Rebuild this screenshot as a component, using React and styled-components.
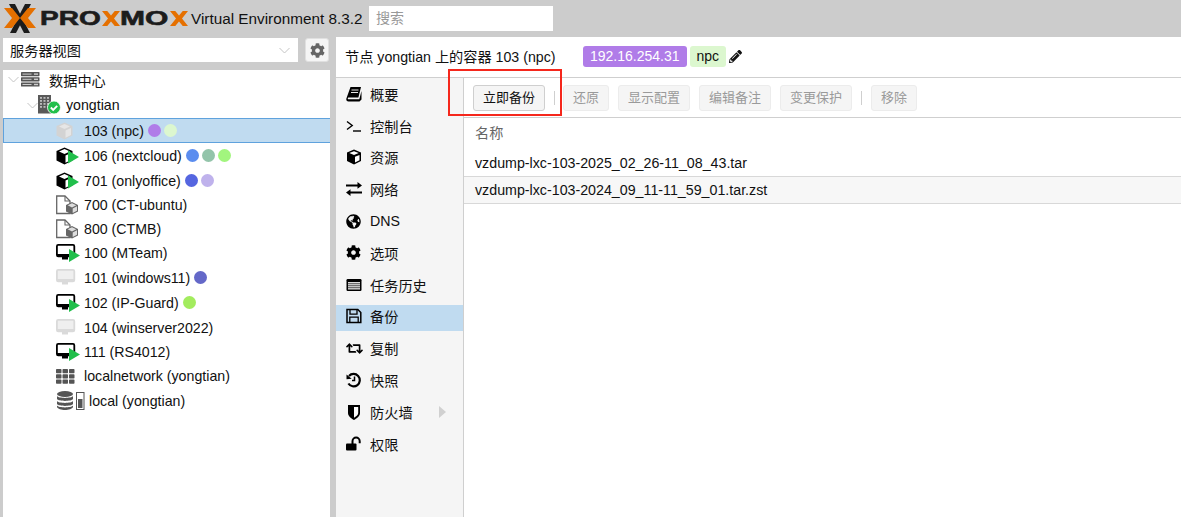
import React from 'react'
import styled, { createGlobalStyle } from 'styled-components'
import { FaGlobeAmericas, FaCog, FaRetweet, FaPencilAlt } from 'react-icons/fa'

const GlobalStyle = createGlobalStyle`
  html, body { margin: 0; padding: 0; background: #cccccc; }
  body { font-family: "Liberation Sans", "Noto Sans CJK SC", sans-serif; color: #000; overflow: hidden; }
  * { box-sizing: border-box; }
`

const Page = styled.div`
  position: relative;
  width: 1181px;
  height: 517px;
  overflow: hidden;
  display: flex;
  flex-direction: column;
`
const TopBar = styled.header`
  height: 37px;
  display: flex;
  align-items: center;
  padding-left: 4px;
`
const Brand = styled.div`
  display: flex;
  align-items: center;
  width: 187px;
`
const LogoSlot = styled.span`
  display: inline-flex;
  width: 36px;
`
const BrandText = styled.span`
  font-family: "Liberation Sans", sans-serif;
  font-weight: 700;
  font-size: 20px;
  color: #1c1c1c;
  -webkit-text-stroke: 0.6px #1c1c1c;
  transform: scaleX(${p => p.$sx});
  transform-origin: left center;
  width: ${p => p.$w}px;
  display: inline-block;
`
const Version = styled.div`
  font-size: 15.3px;
  color: #111;
  width: 178px;
`
const Search = styled.div`
  width: 184px;
  height: 25px;
  background: #fff;
  color: #999;
  font-size: 14px;
  padding: 1px 7px;
`
const Main = styled.div`
  flex: 1;
  display: flex;
  min-height: 0;
`
const Left = styled.aside`
  width: 327px;
  margin: 1px 0 0 3px;
  display: flex;
  flex-direction: column;
`
const ViewRow = styled.div`
  display: flex;
  height: 24px;
  gap: 7px;
  margin-bottom: 8px;
`
const ViewSelect = styled.div`
  width: 295px;
  background: #fff;
  font-size: 14.2px;
  display: flex;
  align-items: center;
  justify-content: space-between;
  padding: 0 8px 0 7px;
  color: #111;
`
const GearButton = styled.div`
  width: 24px;
  background: #f5f5f5;
  border: 1px solid #e0e0e0;
  border-radius: 3px;
  display: flex;
  align-items: center;
  justify-content: center;
  color: #666;
  font-size: 15px;
`
const Tree = styled.div`
  flex: 1;
  background: #fff;
`
const Row = styled.div`
  display: flex;
  align-items: center;
  height: ${p => p.$h || 24}px;
  padding-left: ${p => p.$indent}px;
  padding-bottom: ${p => p.$pb || 0}px;
  font-size: 14.2px;
  color: #111;
  background: ${p => (p.$selected ? '#c0dbf0' : 'transparent')};
  box-shadow: ${p => (p.$selected ? 'inset 1px 1px 0 #5fa2dd, inset 0 -1px 0 #5fa2dd' : 'none')};
`
const Arrow = styled.span`
  width: ${p => p.$w}px;
  display: inline-flex;
`
const IconSlot = styled.span`
  width: ${p => p.$w || 28}px;
  height: 20px;
  display: inline-flex;
  align-items: center;
  flex: none;
`
const Dots = styled.span`
  display: inline-flex;
  gap: 3px;
  margin-left: 4px;
`
const Dot = styled.span`
  width: 13px;
  height: 13px;
  border-radius: 50%;
  background: ${p => p.$c};
`
const Right = styled.section`
  flex: 1;
  margin-left: 6px;
  background: #fff;
  display: flex;
  flex-direction: column;
  min-width: 0;
`
const TitleBar = styled.div`
  height: 41px;
  display: flex;
  align-items: center;
  border-bottom: 1px solid #cfcfcf;
  padding: 0 0 2px 9px;
  font-size: 14.2px;
  color: #111;
`
const TitleText = styled.div`
  width: 238px;
`
const Tag = styled.span`
  height: 21px;
  line-height: 20px;
  padding: 0 7px;
  border-radius: 3px;
  margin-right: 3px;
  font-size: 14px;
  background: ${p => p.$bg};
  color: ${p => p.$fg};
`
const Body = styled.div`
  flex: 1;
  display: flex;
  min-height: 0;
`
const Menu = styled.nav`
  width: 128px;
  background: #f5f5f5;
  border-right: 1px solid #cfcfcf;
  padding-top: 4.4px;
  display: flex;
  flex-direction: column;
  gap: 5.8px;
`
const MenuItem = styled.div`
  height: 26px;
  display: flex;
  align-items: center;
  padding: 0 0 3px 10px;
  font-size: 14.2px;
  color: #111;
  background: ${p => (p.$active ? '#c0dbf0' : 'transparent')};
`
const MenuIcon = styled.span`
  width: 24px;
  display: inline-flex;
  align-items: center;
  color: #000;
  font-size: 15px;
`
const MenuLabel = styled.span`
  width: 69px;
`
const Content = styled.div`
  flex: 1;
  display: flex;
  flex-direction: column;
  min-width: 0;
`
const Toolbar = styled.div`
  height: 40px;
  border-bottom: 1px solid #cfcfcf;
  display: flex;
  align-items: center;
  padding-left: 9px;
  gap: 9px;
`
const ToolButton = styled.div`
  height: 26px;
  line-height: 23px;
  padding: 0 9px;
  font-size: 13px;
  background: #f5f5f5;
  border: 1px solid ${p => (p.$disabled ? '#ececec' : '#cfcfcf')};
  border-radius: 3px;
  color: ${p => (p.$disabled ? '#9a9a9a' : '#111')};
`
const Sep = styled.span`
  width: 1px;
  height: 14px;
  background: #cfcfcf;
  margin-right: ${p => (p.$tight ? -1 : 0)}px;
`
const GridHead = styled.div`
  height: 32px;
  padding: 0 11px 5px;
  display: flex;
  align-items: center;
  font-size: 14.2px;
  color: #666;
`
const GridRow = styled.div`
  height: 27px;
  padding: 0 11px;
  display: flex;
  align-items: center;
  font-size: 14.24px;
  color: #111;
  border-bottom: 1px solid #d8d8d8;
  background: ${p => (p.$alt ? '#f7f7f7' : '#fff')};
`
const Highlight = styled.div`
  position: absolute;
  left: 448px;
  top: 69px;
  width: 114px;
  height: 47px;
  border: 2px solid #f5271c;
  pointer-events: none;
`
const SubArrow = styled.span`
  width: 0;
  height: 0;
  border-left: 7px solid #d0d0d0;
  border-top: 6px solid transparent;
  border-bottom: 6px solid transparent;
`

const LogoX = () => (
  <svg width="32" height="29" viewBox="0 0 32 29">
    <path d="M5 0h6l15 29h-6z" fill="#1c1c1c" />
    <path d="M27 0h-6L6 29h6z" fill="#1c1c1c" />
    <path d="M0 4h8l8 10-8 10H0l8-10z" fill="#e57000" />
    <path d="M32 4h-8l-8 10 8 10h8l-8-10z" fill="#e57000" />
  </svg>
)
const SmallX = () => (
  <svg width="18" height="15" viewBox="0 0 24 20">
    <path d="M0 0h7l5 6 5-6h7l-8 10 8 10h-7l-5-6-5 6H0l8-10z" fill="#e57000" />
  </svg>
)

const Play = ({ x, y }) => <path d={`M${x} ${y}l11 6.500-11 6.500z`} fill="#21bf4b" />

const Cube = ({ grey, play }) => (
  <svg width="24" height="18" viewBox="0 0 24 18">
    <path d="M8.500 .5l8 3.500v9.500l-8 4-8-4V4z" fill={grey ? '#d3d3d3' : '#000'} />
    <path d="M8.500 2l5.500 2.400-5.500 2.500L3 4.400z" fill={grey ? '#e6e6e6' : '#fff'} />
    <path d="M9.500 8.500l5.500-2.600v7L9.500 15.700z" fill={grey ? '#e6e6e6' : '#fff'} />
    {play && <Play x={12} y={3.500} />}
  </svg>
)
const Template = () => (
  <svg width="24" height="20" viewBox="0 0 24 20">
    <path d="M.7 1h8.300l5 5v12.500H.7z" fill="#fff" stroke="#666" strokeWidth="1.300" />
    <path d="M9 1v5h5" fill="none" stroke="#666" strokeWidth="1.100" />
    <path d="M16 7l6 3v6.500L16 19.500l-6-3V10z" fill="#666" />
    <path d="M16 8.200l4.300 2.100-4.300 2.100-4.300-2.100z" fill="#ddd" />
    <path d="M16.700 13.400l4.300-2.100v4.500l-4.300 2.100z" fill="#ddd" />
  </svg>
)
const Monitor = ({ on }) => {
  const c = on ? '#000' : '#dadada'
  return (
    <svg width="25" height="18" viewBox="0 0 25 18">
      <rect x=".9" y=".9" width="17.400" height="11.500" rx="1.300" fill={on ? '#fff' : '#efefef'} stroke={c} strokeWidth="1.800" />
      <path d="M1 10h12v3H1z" fill={c} />
      <path d="M6 13h6v2.500H6z" fill={c} />
      {!on && <path d="M13 10h5v3h-5z" fill={c} />}
      {on && <Play x={13} y={5} />}
    </svg>
  )
}
const ServerIcon = () => (
  <svg width="19" height="15" viewBox="0 0 19 15">
    {[0, 5.200, 10.400].map(y => (
      <g key={y}>
        <rect x="0" y={y} width="18.500" height="4.200" rx=".6" fill="#555" />
        <rect x="1.500" y={y + 1.600} width="9" height="1" fill="#ccc" />
        <rect x="13" y={y + 1.400} width="4" height="1.400" fill="#ccc" />
      </g>
    ))}
  </svg>
)
const NodeIcon = () => (
  <svg width="24" height="20" viewBox="0 0 24 20">
    <rect x="0" y="0" width="13" height="18.500" fill="#595959" />
    {[2, 5, 8, 11].map(y => [2, 5.500, 9].map(x => <rect key={`${x}-${y}`} x={x} y={y} width="2" height="1.800" fill="#bbb" />))}
    <circle cx="16" cy="12.500" r="6.500" fill="#21bf4b" stroke="#fff" strokeWidth=".8" />
    <path d="M12.800 12.500l2.400 2.400 4-4" fill="none" stroke="#fff" strokeWidth="1.900" />
  </svg>
)
const SdnIcon = () => (
  <svg width="19" height="15" viewBox="0 0 19 15">
    {[0, 5.200, 10.400].map(y => [0, 6.500, 13].map(x => <rect key={`${x}-${y}`} x={x} y={y} width="5.500" height="4.300" rx=".7" fill="#555" />))}
  </svg>
)
const StorageIcon = () => (
  <svg width="29" height="19" viewBox="0 0 29 19">
    <ellipse cx="8" cy="3" rx="8" ry="3" fill="#555" />
    <path d="M0 5c1.500 2.500 14.500 2.500 16 0v3c-1.500 2.500-14.500 2.500-16 0zM0 10c1.500 2.500 14.500 2.500 16 0v3c-1.500 2.500-14.500 2.500-16 0zM0 14.500c1.500 2.500 14.500 2.500 16 0V16c-1.500 4-14.500 4-16 0z" fill="#555" />
    <rect x="19.500" y="1.500" width="7.500" height="17" fill="#fff" stroke="#555" />
    <rect x="21" y="8" width="4.500" height="9" fill="#555" />
  </svg>
)

// menu glyphs, drawn on a 16x16 box
const Glyph = ({ children, w = 16, h = 16 }) => (
  <svg width={w} height={h} viewBox="0 0 16 16">{children}</svg>
)
const BookIcon = () => (
  <Glyph>
    <path d="M4.500 1H15l-2.600 10.500H2.800c-.7 0-1 .4-1 .9s.3.900 1 .9h10.500L15.500 5v8.500L13.500 15.500H2.500C1 15.500 0 14.300.3 12.800z" fill="#000" />
    <path d="M5.500 4h7M5 6.500h7" stroke="#fff" strokeWidth=".9" />
  </Glyph>
)
const TerminalIcon = () => (
  <Glyph>
    <path d="M1 3.500l5.200 4-5.200 4" fill="none" stroke="#000" strokeWidth="1.400" />
    <path d="M7 13h8" stroke="#000" strokeWidth="1.400" />
  </Glyph>
)
const CubeIcon = () => (
  <Glyph>
    <path d="M8 .5l7 3v8.500l-7 3.500-7-3.500V3.500z" fill="#000" />
    <path d="M8 2.200l4.700 1.900L8 6 3.300 4.100z" fill="#fff" />
    <path d="M9 7.800l4.500-1.900v5.300L9 13.500z" fill="#fff" />
  </Glyph>
)
const ExchangeIcon = () => (
  <Glyph>
    <path d="M0 4h11.500V1.500L16 5l-4.500 3.300V6H0z" fill="#000" transform="translate(0 -.5)" />
    <path d="M16 10H4.500V7.700L0 11l4.500 3.500V12H16z" fill="#000" transform="translate(0 .5)" />
  </Glyph>
)
const ListAltIcon = () => (
  <Glyph>
    <rect x=".5" y="2" width="15" height="12" rx="1.200" fill="#000" />
    <rect x="2" y="5" width="12" height="7.500" fill="#ddd" />
    <path d="M2 6.700h12M2 8.700h12M2 10.700h12" stroke="#555" strokeWidth="1" />
  </Glyph>
)
const SaveIcon = () => (
  <Glyph>
    <path d="M1 1.500h10.800l3 3v10H1z" fill="none" stroke="#000" strokeWidth="1.500" />
    <path d="M4 2v4.200h7V2M3.800 14V9.200h8.400V14" fill="none" stroke="#000" strokeWidth="1.300" />
  </Glyph>
)
const HistoryIcon = () => (
  <Glyph>
    <path d="M3 4a6.200 6.200 0 1 1-.6 7.500" fill="none" stroke="#000" strokeWidth="2.200" />
    <path d="M.5 2.500l5.200 4.200-5.200.5z" fill="#000" />
    <path d="M8.500 4.500v4H6" fill="none" stroke="#000" strokeWidth="1.500" />
  </Glyph>
)
const ShieldIcon = () => (
  <Glyph>
    <path d="M2 1h12v8c0 3.500-3.500 5.500-6 7-2.500-1.500-6-3.500-6-7z" fill="#000" />
    <path d="M8 3h4.200v6c0 2-2.400 3.500-4.200 4.700z" fill="#fff" />
  </Glyph>
)
const UnlockIcon = () => (
  <Glyph>
    <rect x="0" y="7.500" width="10.500" height="7" rx="1" fill="#000" />
    <path d="M6.500 8V5.200a3.600 3.600 0 0 1 7.200 0v2" fill="none" stroke="#000" strokeWidth="2" />
  </Glyph>
)

const Caret = () => (
  <svg width="11" height="7" viewBox="0 0 11 7">
    <path d="M.5 1l5 5 5-5" fill="none" stroke="#c4c4c4" strokeWidth="1" />
  </svg>
)

const treeRows = [
  { icon: <Cube grey />, label: '103 (npc)', dots: ['#b07ce8', '#dcf7cf'], h: 25, selected: true },
  { icon: <Cube play />, label: '106 (nextcloud)', dots: ['#5b8def', '#93c4aa', '#a2f57e'], h: 25 },
  { icon: <Cube play />, label: '701 (onlyoffice)', dots: ['#5566e0', '#bfb2ec'], h: 25 },
  { icon: <Template />, label: '700 (CT-ubuntu)', h: 24 },
  { icon: <Template />, label: '800 (CTMB)', h: 24 },
  { icon: <Monitor on />, label: '100 (MTeam)', h: 24 },
  { icon: <Monitor />, label: '101 (windows11)', dots: ['#6468c8'], h: 25 },
  { icon: <Monitor on />, label: '102 (IP-Guard)', dots: ['#a3ec5e'], h: 25 },
  { icon: <Monitor />, label: '104 (winserver2022)', h: 25 },
  { icon: <Monitor on />, label: '111 (RS4012)', h: 24 },
  { icon: <SdnIcon />, label: 'localnetwork (yongtian)', h: 24 },
]

const menuItems = [
  [<BookIcon />, '概要'],
  [<TerminalIcon />, '控制台'],
  [<CubeIcon />, '资源'],
  [<ExchangeIcon />, '网络'],
  [<FaGlobeAmericas />, 'DNS'],
  [<FaCog />, '选项'],
  [<ListAltIcon />, '任务历史'],
  [<SaveIcon />, '备份', true],
  [<FaRetweet size={17} />, '复制'],
  [<HistoryIcon />, '快照'],
  [<ShieldIcon />, '防火墙'],
  [<UnlockIcon />, '权限'],
]

export default function App() {
  return (
    <Page>
      <GlobalStyle />
      <TopBar>
        <Brand>
          <LogoSlot><LogoX /></LogoSlot>
          <BrandText $w={62} $sx={1.4}>PRO</BrandText>
          <SmallX />
          <BrandText $w={50} $sx={1.5}>MO</BrandText>
          <SmallX />
        </Brand>
        <Version>Virtual Environment 8.3.2</Version>
        <Search>搜索</Search>
      </TopBar>
      <Main>
        <Left>
          <ViewRow>
            <ViewSelect>服务器视图<Caret /></ViewSelect>
            <GearButton><FaCog /></GearButton>
          </ViewRow>
          <Tree>
            <Row $indent={5} $h={23} $pb={4}>
              <Arrow $w={13}><Caret /></Arrow>
              <IconSlot><ServerIcon /></IconSlot>数据中心
            </Row>
            <Row $indent={24} $h={25} $pb={1}>
              <Arrow $w={11}><Caret /></Arrow>
              <IconSlot><NodeIcon /></IconSlot>yongtian
            </Row>
            {treeRows.map(r => (
              <Row key={r.label} $indent={53} $h={r.h} $selected={r.selected}>
                <IconSlot>{r.icon}</IconSlot>
                {r.label}
                {r.dots && <Dots>{r.dots.map(c => <Dot key={c} $c={c} />)}</Dots>}
              </Row>
            ))}
            <Row $indent={54} $h={25}>
              <IconSlot $w={32}><StorageIcon /></IconSlot>local (yongtian)
            </Row>
          </Tree>
        </Left>
        <Right>
          <TitleBar>
            <TitleText>节点 yongtian 上的容器 103 (npc)</TitleText>
            <Tag $bg="#b07ce8" $fg="#fff">192.16.254.31</Tag>
            <Tag $bg="#dcf7cf" $fg="#111">npc</Tag>
            <FaPencilAlt size={13} />
          </TitleBar>
          <Body>
            <Menu>
              {menuItems.map(([icon, label, active]) => (
                <MenuItem key={label} $active={active}>
                  <MenuIcon>{icon}</MenuIcon>
                  <MenuLabel>{label}</MenuLabel>
                  {label === '防火墙' && <SubArrow />}
                </MenuItem>
              ))}
            </Menu>
            <Content>
              <Toolbar>
                <ToolButton>立即备份</ToolButton>
                <Sep $tight />
                <ToolButton $disabled>还原</ToolButton>
                <ToolButton $disabled>显示配置</ToolButton>
                <ToolButton $disabled>编辑备注</ToolButton>
                <ToolButton $disabled>变更保护</ToolButton>
                <Sep />
                <ToolButton $disabled>移除</ToolButton>
              </Toolbar>
              <GridHead>名称</GridHead>
              <GridRow>vzdump-lxc-103-2025_02_26-11_08_43.tar</GridRow>
              <GridRow $alt>vzdump-lxc-103-2024_09_11-11_59_01.tar.zst</GridRow>
            </Content>
          </Body>
        </Right>
      </Main>
      <Highlight />
    </Page>
  )
}
